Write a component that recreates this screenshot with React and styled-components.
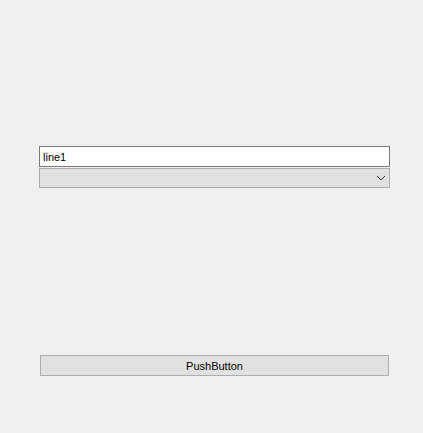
import React from 'react';
import styled, { createGlobalStyle } from 'styled-components';

const GlobalStyle = createGlobalStyle`
  html, body {
    margin: 0;
    padding: 0;
    background: #f0f0f0;
  }
  * {
    box-sizing: border-box;
  }
`

const Window = styled.div`
  width: 423px;
  height: 433px;
  background: #f0f0f0;
  display: flex;
  flex-direction: column;
  padding: 146px 0 0 39px;
  font-family: 'Liberation Sans', 'DejaVu Sans', sans-serif;
  font-size: 11px;
  color: #000;
`

const Fields = styled.div`
  width: 351px;
  display: flex;
  flex-direction: column;
  gap: 1px;
`

const LineEdit = styled.input`
  height: 21px;
  width: 100%;
  margin: 0;
  border: 1px solid #7a7a7a;
  background: #fff;
  padding: 1px 3px 0;
  font: inherit;
  color: #000;
  outline: none;
`

const Combo = styled.div`
  height: 20px;
  border: 1px solid #adadad;
  background: #e1e1e1;
  display: flex;
  align-items: center;
  justify-content: flex-end;
  padding-right: 3px;
`

const Button = styled.button`
  margin: 167px 0 0 1px;
  width: 349px;
  height: 21px;
  border: 1px solid #adadad;
  background: #e1e1e1;
  font: inherit;
  color: #000;
  padding: 1px 0 0;
  display: flex;
  align-items: center;
  justify-content: center;
`

function Chevron() {
  return (
    <svg width="10" height="6" viewBox="0 0 10 6">
      <path d="M1 1 L5 5 L9 1" fill="none" stroke="#333" strokeWidth="1" />
    </svg>
  )
}

export default function App() {
  return (
    <>
      <GlobalStyle />
      <Window>
        <Fields>
          <LineEdit defaultValue="line1" />
          <Combo>
            <Chevron />
          </Combo>
        </Fields>
        <Button>PushButton</Button>
      </Window>
    </>
  )
}
